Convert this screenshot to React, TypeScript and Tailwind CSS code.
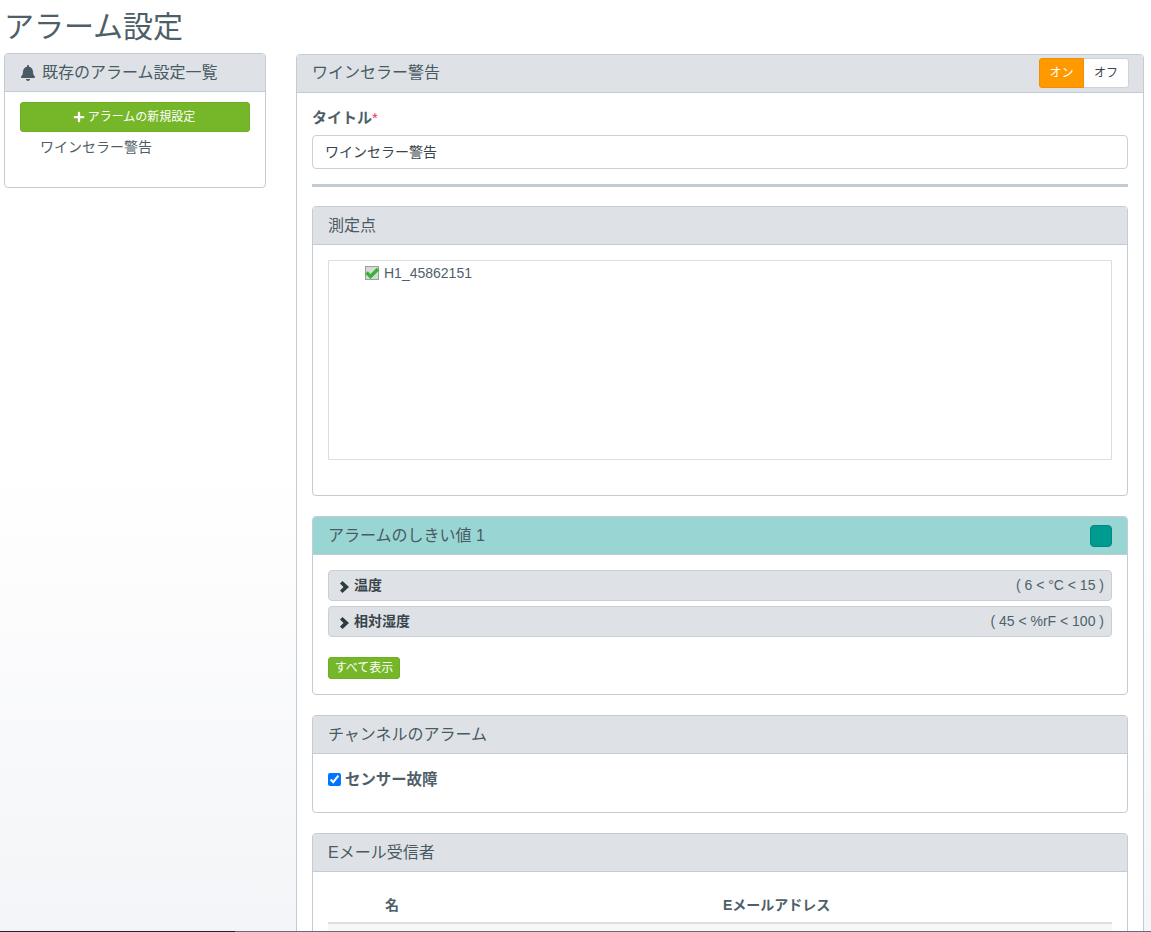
import React from 'react';
import { FaBell, FaPlus } from 'react-icons/fa';

const font = 'font-["Liberation_Sans","Noto_Sans_CJK_JP",sans-serif]';

const Card: React.FC<{
  title: React.ReactNode;
  headerClass?: string;
  right?: React.ReactNode;
  children: React.ReactNode;
  className?: string;
}> = ({ title, headerClass = 'bg-[#dee2e6]', right, children, className = '' }) => (
  <div className={`border border-[#c2ccd4] rounded-[4px] bg-white ${className}`}>
    <div className={`h-[38px] px-[15px] flex items-center justify-between border-b border-[#c2ccd4] rounded-t-[3px] text-[16px] text-[#4a5a64] ${headerClass}`}>
      <span>{title}</span>
      {right}
    </div>
    {children}
  </div>
);

const ThresholdRow: React.FC<{ name: string; range: string; className?: string }> = ({ name, range, className = '' }) => (
  <div className={`h-[31px] flex items-center justify-between pl-[10px] pr-[7px] bg-[#dee2e6] border border-[#c8d0d6] rounded-[4px] ${className}`}>
    <span className="flex items-center gap-[5px] text-[14px] font-bold text-[#39444c]">
      <svg viewBox="0 0 10 12" className="w-[10px] h-[12px] mt-[2px]">
        <path d="M1 2.5L3.5 0L10 6L3.5 12L1 9.5L4.5 6Z" fill="#2f3a42" />
      </svg>
      {name}
    </span>
    <span className="text-[14px] text-[#4f5f6a]">{range}</span>
  </div>
);

export default function App() {
  return (
    <div className={`${font} h-[932px] flex flex-col overflow-hidden bg-gradient-to-b from-white from-50% to-[#f4f5f8] text-[14px] text-[#4f5f6a]`}>
      <div className="flex-1 min-h-0 overflow-hidden">
        <h1 className="h-[53px] pl-[4px] pt-[9px] text-[30px] leading-[36px] text-[#4f5f6a]">アラーム設定</h1>
        <div className="flex items-start">
          <div className="w-[262px] ml-[4px] border border-[#c2ccd4] rounded-[4px] bg-white">
            <div className="h-[38px] pl-[15px] flex items-center gap-[6px] border-b border-[#c2ccd4] bg-[#dee2e6] rounded-t-[3px] text-[16px] text-[#4a5a64]">
              <FaBell className="w-[16px] h-[16px] text-[#4a5a64]" />
              既存のアラーム設定一覧
            </div>
            <div className="px-[15px] pt-[10px] h-[95px]">
              <button className="w-full h-[30px] pr-[2px] flex items-center justify-center gap-[3px] rounded-[3px] bg-[#76b729] border border-[#6fae25] text-white text-[12px]">
                <FaPlus className="w-[12px] h-[12px]" />
                アラームの新規設定
              </button>
              <div className="mt-[5px] pl-[20px] text-[14px] leading-[20px] text-[#4f5f6a]">ワインセラー警告</div>
            </div>
          </div>

          <div className="w-[848px] ml-[30px] mt-[1px] border border-[#c2ccd4] rounded-t-[4px] bg-white">
            <div className="h-[38px] pl-[15px] pr-[14px] flex items-start justify-between border-b border-[#c2ccd4] bg-[#dee2e6] rounded-t-[3px] text-[16px] text-[#4a5a64]">
              <span className="mt-[6px]">ワインセラー警告</span>
              <div className="mt-[3px] flex h-[30px] text-[12px]">
                <span className="w-[45px] flex items-center justify-center bg-[#ff9900] border border-[#f09000] rounded-l-[3px] text-white">オン</span>
                <span className="w-[45px] flex items-center justify-center bg-white border border-l-0 border-[#ccd3d9] rounded-r-[3px] text-[#39444c]">オフ</span>
              </div>
            </div>

            <div className="px-[15px] pt-[14px]">
              <label className="block h-[28px] text-[15px] leading-[22px] font-bold text-[#4f5f6a]">
                タイトル<span className="text-[#e8335a] font-normal">*</span>
              </label>
              <div className="h-[34px] px-[12px] flex items-center border border-[#ccd0d4] rounded-[4px] text-[14px] text-[#39444c]">ワインセラー警告</div>
              <div className="mt-[15px] h-[3px] bg-[#c2ccd4]"></div>

              <Card title="測定点" className="mt-[19px]">
                <div className="h-[250px] px-[15px] pt-[15px]">
                  <div className="h-[200px] border border-[#dcdfe2] pl-[36px] pt-[4px] flex items-start">
                    <span className="mt-[1px] w-[14px] h-[14px] flex items-center justify-center bg-[#d4dcd4] border border-[#98a298]">
                      <svg viewBox="0 0 14 14" className="w-[14px] h-[14px] overflow-visible">
                        <path d="M1.5 6.5l4 4L13 3" fill="none" stroke="#37b437" strokeWidth="3.5" />
                      </svg>
                    </span>
                    <span className="ml-[5px] text-[14px] leading-[17px] text-[#4f5f6a]">H1_45862151</span>
                  </div>
                </div>
              </Card>

              <Card
                title="アラームのしきい値 1"
                headerClass="bg-[#99d6d3]"
                className="mt-[20px]"
                right={<span className="w-[22px] h-[22px] rounded-[4px] bg-[#009b90] border border-[#00897f]" />}
              >
                <div className="h-[139px] px-[15px] pt-[15px]">
                  <ThresholdRow name="温度" range="( 6 < °C < 15 )" />
                  <ThresholdRow name="相対湿度" range="( 45 < %rF < 100 )" className="mt-[5px]" />
                  <button className="mt-[20px] h-[22px] w-[72px] flex items-center justify-center rounded-[3px] bg-[#76b729] border border-[#6fae25] text-white text-[12px]">すべて表示</button>
                </div>
              </Card>

              <Card title="チャンネルのアラーム" className="mt-[20px]">
                <div className="h-[58px] px-[15px] pt-[15px] flex items-start">
                  <input type="checkbox" defaultChecked className="mt-[4px] w-[13px] h-[13px] accent-[#0075ff]" />
                  <span className="ml-[4px] text-[15.4px] leading-[22px] font-bold text-[#4f5f6a]">センサー故障</span>
                </div>
              </Card>

              <Card title="Eメール受信者" className="mt-[20px]">
                <div className="px-[15px] pt-[23px]">
                  <div className="flex h-[29px] border-b-[2px] border-[#dedede] text-[14px] font-bold text-[#4f5f6a]">
                    <span className="w-[395px] pl-[57px]">名</span>
                    <span>Eメールアドレス</span>
                  </div>
                  <div className="h-[60px] bg-[#f7f7f7]"></div>
                </div>
              </Card>
            </div>
          </div>
        </div>
      </div>
      <div className="h-[1px] shrink-0 flex">
        <div className="w-[235px] bg-[#222222]"></div>
        <div className="flex-1 bg-[#6b6b6b]"></div>
      </div>
    </div>
  );
}
